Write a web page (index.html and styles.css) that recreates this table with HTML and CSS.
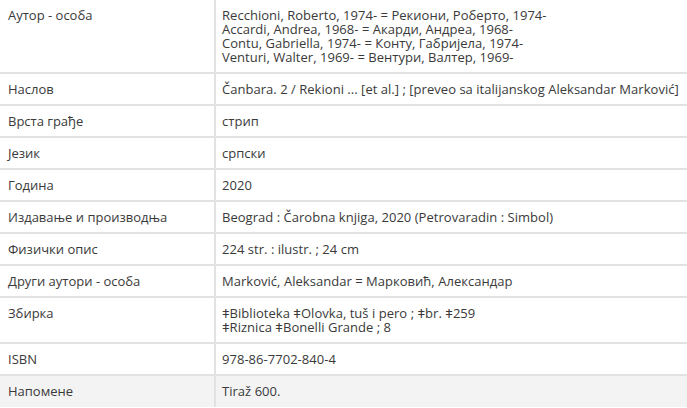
FILE: index.html
```html
<!DOCTYPE html>
<html lang="sr">
<head>
<meta charset="utf-8">
<link rel="stylesheet" href="styles.css">
</head>
<body>
<div class="record">
  <div class="row">
    <div class="label">Аутор - особа</div>
    <div class="value">Recchioni, Roberto, 1974- = Рекиони, Роберто, 1974-<br>Accardi, Andrea, 1968- = Акарди, Андреа, 1968-<br>Contu, Gabriella, 1974- = Конту, Габријела, 1974-<br>Venturi, Walter, 1969- = Вентури, Валтер, 1969-</div>
  </div>
  <div class="row">
    <div class="label">Наслов</div>
    <div class="value">Čanbara. 2 / Rekioni ... [et al.] ; [preveo sa italijanskog Aleksandar Marković]</div>
  </div>
  <div class="row">
    <div class="label">Врста грађе</div>
    <div class="value">стрип</div>
  </div>
  <div class="row">
    <div class="label">Језик</div>
    <div class="value">српски</div>
  </div>
  <div class="row">
    <div class="label">Година</div>
    <div class="value">2020</div>
  </div>
  <div class="row">
    <div class="label">Издавање и производња</div>
    <div class="value">Beograd : Čarobna knjiga, 2020 (Petrovaradin : Simbol)</div>
  </div>
  <div class="row">
    <div class="label">Физички опис</div>
    <div class="value">224 str. : ilustr. ; 24 cm</div>
  </div>
  <div class="row">
    <div class="label">Други аутори - особа</div>
    <div class="value">Marković, Aleksandar = Марковић, Александар</div>
  </div>
  <div class="row">
    <div class="label">Збирка</div>
    <div class="value">ǂBiblioteka ǂOlovka, tuš i pero ; ǂbr. ǂ259<br>ǂRiznica ǂBonelli Grande ; 8</div>
  </div>
  <div class="row">
    <div class="label">ISBN</div>
    <div class="value">978-86-7702-840-4</div>
  </div>
  <div class="row row-alt">
    <div class="label">Напомене</div>
    <div class="value">Tiraž 600.</div>
  </div>
</div>
</body>
</html>
```
FILE: styles.css
```css
html, body {
  margin: 0;
  padding: 0;
  background: #fff;
}
body {
  font-family: "Open Sans", "Liberation Sans", sans-serif;
  font-size: 13px;
  line-height: 14px;
  color: #3a3a3a;
}
.record {
  width: 687px;
  overflow: hidden;
}
.row {
  display: grid;
  grid-template-columns: 216px 1fr;
  border-bottom: 2px solid #e2e2e2;
}
.row-alt {
  background: #f3f3f3;
  border-bottom: none;
  min-height: 31px;
}
.label {
  padding: 8px 8px;
  border-right: 2px solid #e2e2e2;
}
.value {
  padding: 8px 6px;
  white-space: nowrap;
  letter-spacing: 0.03px;
}
```
